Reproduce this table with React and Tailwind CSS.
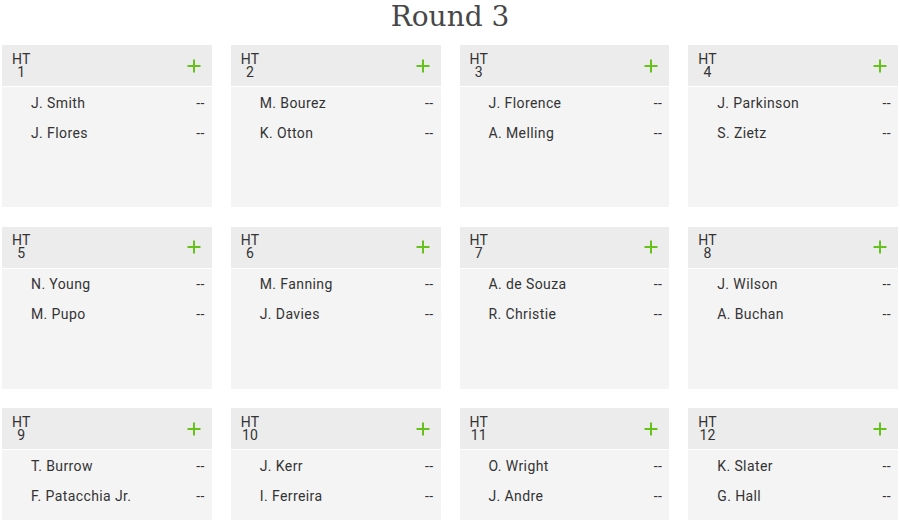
import React from "react";

const teams = [
  ["1", "J. Smith", "J. Flores"],
  ["2", "M. Bourez", "K. Otton"],
  ["3", "J. Florence", "A. Melling"],
  ["4", "J. Parkinson", "S. Zietz"],
  ["5", "N. Young", "M. Pupo"],
  ["6", "M. Fanning", "J. Davies"],
  ["7", "A. de Souza", "R. Christie"],
  ["8", "J. Wilson", "A. Buchan"],
  ["9", "T. Burrow", "F. Patacchia Jr."],
  ["10", "J. Kerr", "I. Ferreira"],
  ["11", "O. Wright", "J. Andre"],
  ["12", "K. Slater", "G. Hall"],
];

function Plus() {
  return (
    <svg width="14" height="14" viewBox="0 0 14 14" className="block">
      <path d="M7 0.5V13.5M0.5 7H13.5" stroke="#66c21a" strokeWidth="2" />
    </svg>
  );
}

function Card({ n, a, b }) {
  return (
    <div className="h-[162px] bg-[#f4f4f4] flex flex-col">
      <div className="h-[42px] bg-[#ececec] border-b border-white flex items-center justify-between pl-[10px] pr-[11px] shrink-0">
        <div className="inline-flex flex-col items-center text-[14px] leading-[13px] text-[#333] tracking-[0.3px]">
          <span>HT</span>
          <span>{n}</span>
        </div>
        <Plus />
      </div>
      <div className="pt-[1px]">
        {[a, b].map((name, i) => (
          <div
            key={i}
            className="h-[30px] flex items-center justify-between pl-[29px] pr-[7px] text-[14px] text-[#333] tracking-[0.4px]"
          >
            <span>{name}</span>
            <span>--</span>
          </div>
        ))}
      </div>
    </div>
  );
}

export default function App() {
  return (
    <div
      className="w-[900px] h-[520px] overflow-hidden bg-white"
      style={{ fontFamily: "Roboto, 'Liberation Sans', sans-serif" }}
    >
      <div className="h-[45px] flex items-start justify-center">
        <h1
          className="text-[28px] leading-[33px] text-[#474747] font-light"
          style={{ fontFamily: "'DejaVu Serif', 'Liberation Serif', serif" }}
        >
          Round 3
        </h1>
      </div>
      <div className="grid grid-cols-4 gap-x-[19px] gap-y-[19.5px] px-[2px]">
        {teams.map(([n, a, b]) => (
          <Card key={n} n={n} a={a} b={b} />
        ))}
      </div>
    </div>
  );
}
